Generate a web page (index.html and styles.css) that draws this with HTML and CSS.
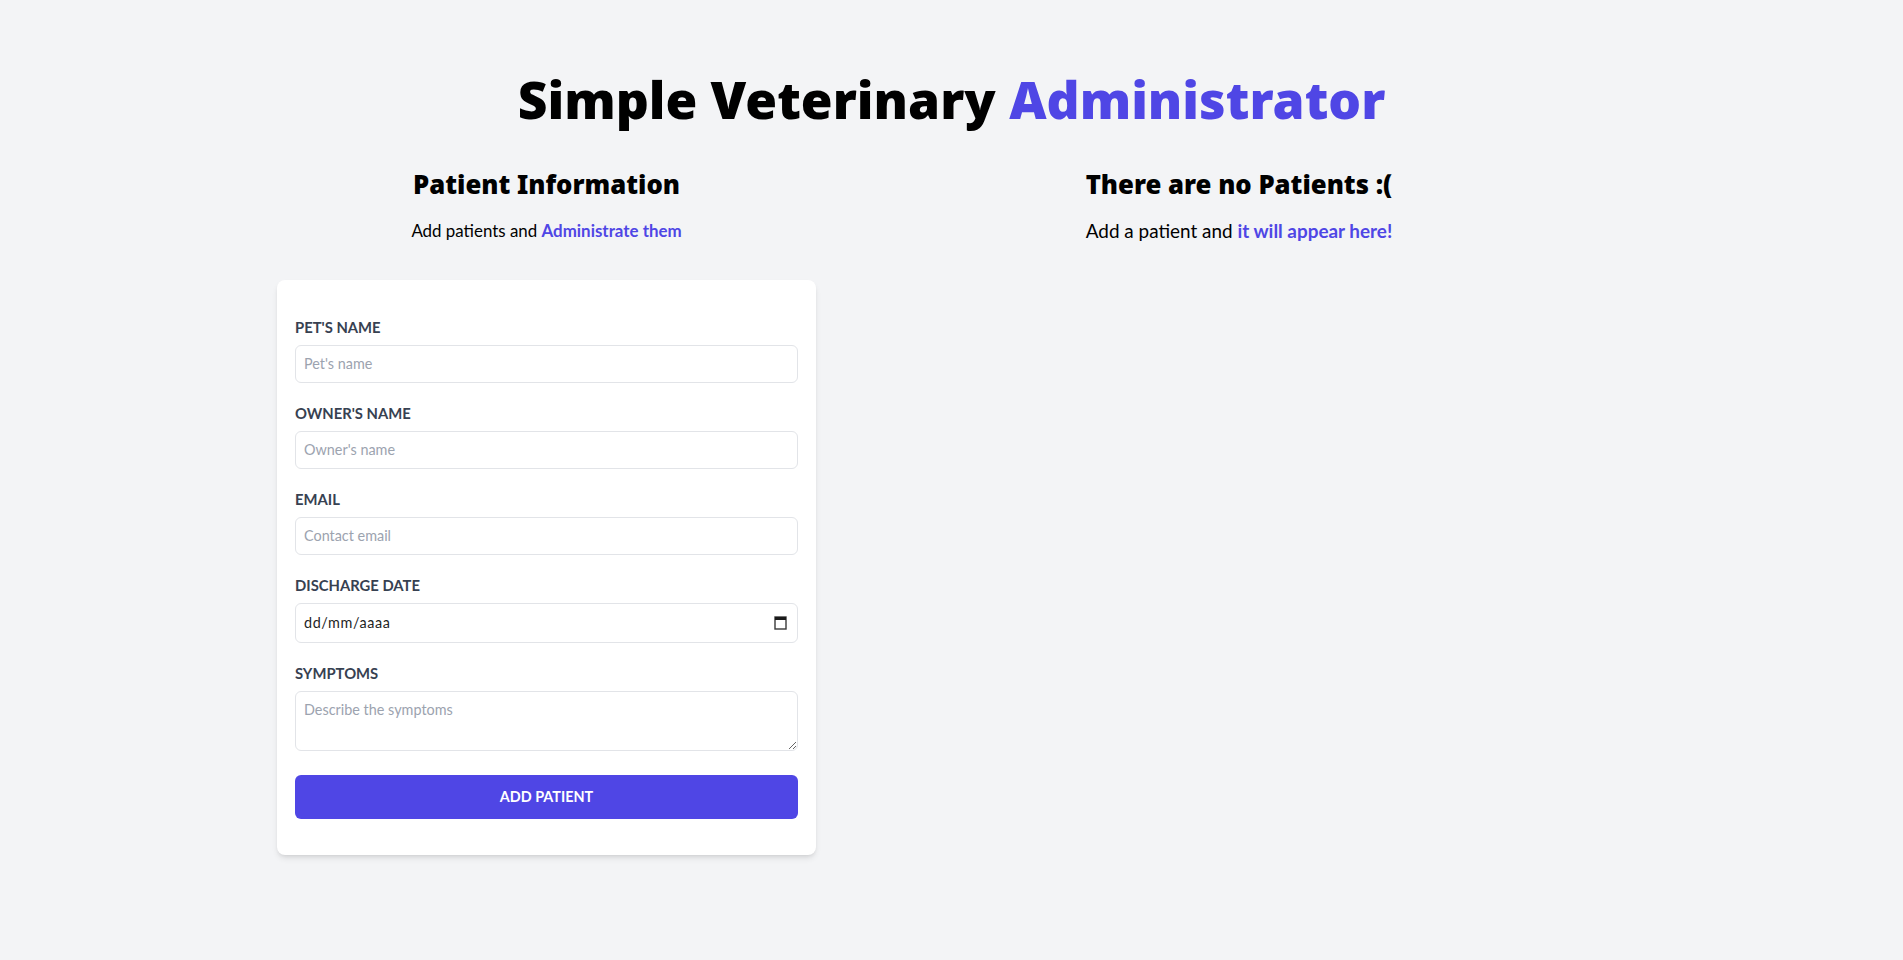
FILE: index.html
```html
<!DOCTYPE html>
<html lang="en">
<head>
<meta charset="utf-8">
<title>Simple Veterinary Administrator</title>
<link rel="stylesheet" href="styles.css">
</head>
<body>
<main class="page">
  <header class="header">
    <h1 class="title">Simple Veterinary <span class="accent">Administrator</span></h1>
  </header>
  <div class="columns">
    <section class="col col-form">
      <h2 class="col-title">Patient Information</h2>
      <p class="col-sub">Add patients and <span class="accent-bold">Administrate them</span></p>
      <form class="card">
        <div class="field">
          <label class="label" for="pet">Pet's name</label>
          <input class="input" id="pet" type="text" placeholder="Pet's name">
        </div>
        <div class="field">
          <label class="label" for="owner">Owner's name</label>
          <input class="input" id="owner" type="text" placeholder="Owner's name">
        </div>
        <div class="field">
          <label class="label" for="email">Email</label>
          <input class="input" id="email" type="email" placeholder="Contact email">
        </div>
        <div class="field">
          <label class="label" for="discharge">Discharge date</label>
          <div class="date-wrap">
            <input class="input input-date" id="discharge" type="text" placeholder="dd/mm/aaaa">
            <svg class="cal-icon" width="13" height="14" viewBox="0 0 13 14" aria-hidden="true">
              <rect x="1" y="1" width="11" height="12" fill="none" stroke="#3a3a3a" stroke-width="1.4"/>
              <rect x="1" y="1" width="11" height="3" fill="#1a1a1a"/>
            </svg>
          </div>
        </div>
        <div class="field">
          <label class="label" for="symptoms">Symptoms</label>
          <textarea class="input textarea" id="symptoms" placeholder="Describe the symptoms"></textarea>
        </div>
        <button class="btn" type="button">Add patient</button>
      </form>
    </section>
    <section class="col col-list">
      <h2 class="col-title">There are no Patients :(</h2>
      <p class="col-sub col-sub-lg">Add a patient and <span class="accent-bold">it will appear here!</span></p>
    </section>
  </div>
</main>
</body>
</html>
```

FILE: styles.css
```css
* {
  box-sizing: border-box;
}

html, body {
  margin: 0;
  padding: 0;
}

body {
  background: #f3f4f6;
  font-family: "Lato", "Open Sans", sans-serif;
  color: #000;
  min-height: 960px;
}

.page {
  padding-top: 74px;
}

.header {
  text-align: center;
}

.title {
  margin: 0;
  font-family: "Noto Sans", "Open Sans", sans-serif;
  font-size: 51.5px;
  line-height: 1;
  font-weight: 900;
  color: #000;
}

.accent {
  color: #4f46e5;
}

.accent-bold {
  color: #4f46e5;
  font-weight: 700;
}

.columns {
  width: 1385px;
  margin: 44px auto 0;
  display: grid;
  grid-template-columns: 575px 1fr;
}

.col {
  text-align: center;
}

.col-form {
  padding: 0 18px;
}

.col-title {
  margin: 0;
  font-family: "Noto Sans", "Open Sans", sans-serif;
  font-size: 25.7px;
  line-height: 30px;
  font-weight: 900;
}

.col-sub {
  margin: 19px 0 0;
  font-size: 16.9px;
  line-height: 24px;
}

.col-sub-lg {
  font-size: 18.9px;
}

.card {
  margin-top: 37px;
  background: #fff;
  border-radius: 8px;
  box-shadow: 0 4px 6px -1px rgba(0, 0, 0, 0.1), 0 2px 4px -2px rgba(0, 0, 0, 0.1);
  padding: 37px 18px 36px;
  text-align: left;
}

.field {
  margin-bottom: 20px;
}

.field:last-of-type {
  margin-bottom: 24px;
}

.label {
  display: block;
  font-size: 14.8px;
  line-height: 20px;
  font-weight: 700;
  text-transform: uppercase;
  color: #374151;
}

.input {
  display: block;
  width: 100%;
  margin-top: 8px;
  height: 38px;
  padding: 0 8px;
  border: 1px solid #e2e4e8;
  border-radius: 6px;
  font-family: inherit;
  font-size: 14.4px;
  color: #111;
  background: #fff;
  outline: none;
}

.input::placeholder {
  color: #9ca3af;
}

.date-wrap {
  position: relative;
}

.input-date {
  height: 40px;
}

.input-date::placeholder {
  color: #1f1f1f;
  letter-spacing: 0.6px;
}

.cal-icon {
  position: absolute;
  right: 11px;
  top: 13px;
}

.textarea {
  height: 60px;
  padding: 8px;
  line-height: 20px;
  resize: vertical;
}

.btn {
  display: block;
  width: 100%;
  height: 44px;
  border: none;
  border-radius: 6px;
  background: #4f46e5;
  color: #fff;
  font-family: inherit;
  font-size: 14.4px;
  font-weight: 700;
  text-transform: uppercase;
  cursor: pointer;
}
```
